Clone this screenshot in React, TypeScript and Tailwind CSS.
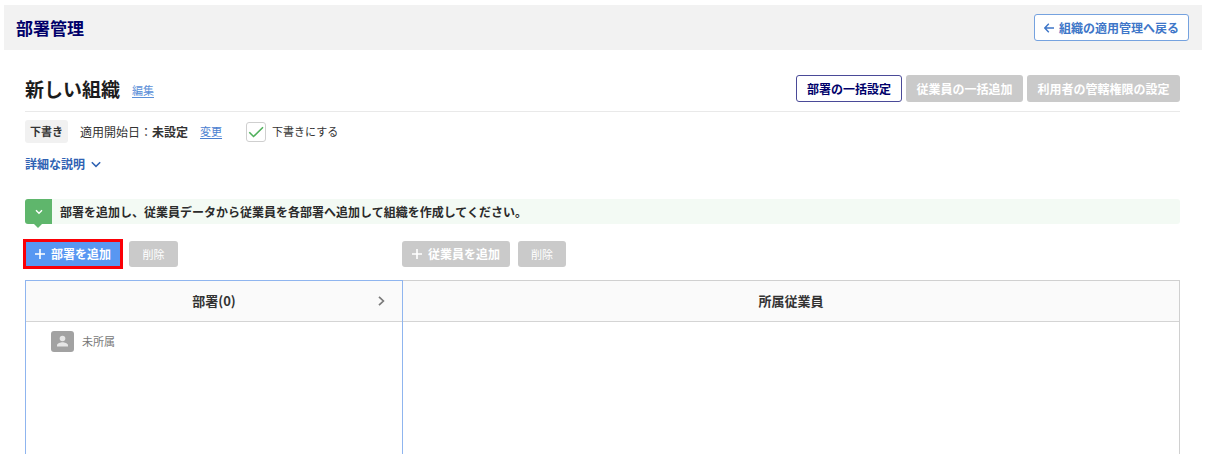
import React from "react";

type ToolButtonProps = {
  children: React.ReactNode;
  className?: string;
  disabled?: boolean;
};

function SolidButton({ children, className = "", disabled }: ToolButtonProps) {
  return (
    <button
      type="button"
      disabled={disabled}
      className={`flex items-center justify-center whitespace-nowrap text-white ${
        disabled ? "rounded-[3px] bg-[#cacaca]" : "bg-[#5897f2]"
      } ${className}`}
    >
      {children}
    </button>
  );
}

function PlusIcon() {
  return (
    <svg width="10" height="10" viewBox="0 0 10 10" fill="none" stroke="currentColor" strokeWidth="1.6" aria-hidden="true">
      <path d="M5 0v10M0 5h10" />
    </svg>
  );
}

function PageHeader() {
  return (
    <header className="mr-[5px] ml-1 flex h-[45px] items-center justify-between bg-[#f2f2f2] pr-[13px] pl-3">
      <h1 className="text-[17px] leading-6 font-bold text-[#00006a]">部署管理</h1>
      <a
        href="#organizations"
        className="flex h-[27px] items-center gap-[5px] whitespace-nowrap rounded-[3px] border border-[#75a2df] bg-white px-[9px] text-xs font-bold text-[#3e76c8]"
      >
        <svg width="10" height="10" viewBox="0 0 10 10" fill="none" stroke="currentColor" strokeWidth="1.4" aria-hidden="true">
          <path d="M10 5H0.8M4.8 0.8L0.8 5l4 4.2" />
        </svg>
        組織の適用管理へ戻る
      </a>
    </header>
  );
}

function OrganizationTitle() {
  return (
    <div className="flex items-center justify-between border-b border-[#e9e9e9] pb-[9px]">
      <div className="flex items-center gap-3">
        <h2 className="text-[19px] leading-[27px] font-bold text-[#1c1c1c]">新しい組織</h2>
        <a href="#edit" className="pt-1 text-[11px] text-[#5b8fd8] underline underline-offset-2">
          編集
        </a>
      </div>
      <div className="flex gap-1">
        <button
          type="button"
          className="flex h-[27px] w-[106px] items-center justify-center whitespace-nowrap rounded-[3px] border border-[#4a4a98] bg-white text-xs font-bold text-[#00006a]"
        >
          部署の一括設定
        </button>
        <SolidButton disabled className="h-[27px] w-[117px] text-xs font-bold">
          従業員の一括追加
        </SolidButton>
        <SolidButton disabled className="h-[27px] w-[153px] text-xs font-bold">
          利用者の管轄権限の設定
        </SolidButton>
      </div>
    </div>
  );
}

function StatusRow() {
  return (
    <div className="mt-2 flex items-center text-[#333333]">
      <span className="flex h-[23px] w-[43px] items-center justify-center rounded-[3px] bg-[#f1f1f1] text-[11px] font-bold">
        下書き
      </span>
      <p className="ml-3 text-xs">
        適用開始日：<strong className="font-bold">未設定</strong>
      </p>
      <a href="#change" className="ml-3 text-[11px] text-[#4a80d0] underline underline-offset-2">
        変更
      </a>
      <div className="ml-6 flex items-center gap-[6px]">
        <span className="relative flex">
          <input
            id="draft"
            type="checkbox"
            defaultChecked
            className="peer size-5 appearance-none rounded-[3px] border border-[#cfcfcf] bg-white"
          />
          <svg
            className="pointer-events-none absolute inset-0 hidden peer-checked:block"
            width="20"
            height="20"
            viewBox="0 0 20 20"
            fill="none"
            stroke="#50b05c"
            strokeWidth="1.6"
            aria-hidden="true"
          >
            <path d="M3.300 10.300l4.200 4.200L17 5.300" />
          </svg>
        </span>
        <label htmlFor="draft" className="text-[11px]">
          下書きにする
        </label>
      </div>
    </div>
  );
}

function Guide() {
  return (
    <div className="mt-[27px] flex h-[25px] items-center gap-2 rounded-[3px] bg-[#f3faf4]">
      <span className="relative flex h-full w-[27px] items-center justify-center rounded-l-[3px] bg-[#5fb66c] text-white">
        <svg width="8" height="6" viewBox="0 0 8 6" fill="none" stroke="currentColor" strokeWidth="1.4" aria-hidden="true">
          <path d="M1 1.2l3 3 3-3" />
        </svg>
        <svg className="absolute top-full left-[9px]" width="8" height="4" viewBox="0 0 8 4" aria-hidden="true">
          <path d="M0 0h8L4 4z" fill="#5fb66c" />
        </svg>
      </span>
      <p className="text-xs font-bold text-[#2b2b2b]">
        部署を追加し、従業員データから従業員を各部署へ追加して組織を作成してください。
      </p>
    </div>
  );
}

export default function App() {
  return (
    <div className="flex min-h-screen flex-col bg-white pt-[5px] font-['Noto_Sans_CJK_JP',sans-serif]">
      <PageHeader />
      <main className="flex flex-1 flex-col pt-[25px] pr-[27px] pl-[25px]">
        <OrganizationTitle />
        <StatusRow />
        <button type="button" className="mt-[13px] flex items-center gap-[6px] self-start text-xs font-bold text-[#2f62b3]">
          詳細な説明
          <svg width="10" height="7" viewBox="0 0 10 7" fill="none" stroke="currentColor" strokeWidth="1.5" aria-hidden="true">
            <path d="M0.8 1.2L5 5.4l4.2-4.2" />
          </svg>
        </button>
        <Guide />
        <div className="mt-[17px] grid grid-cols-[377px_1fr]">
          <div className="flex gap-2">
            <SolidButton className="h-[26px] w-24 gap-[6px] text-xs font-bold outline-3 -outline-offset-1 outline-[#fb0007]">
              <PlusIcon />
              部署を追加
            </SolidButton>
            <SolidButton disabled className="h-[26px] w-[49px] text-[11px]">
              削除
            </SolidButton>
          </div>
          <div className="flex gap-2">
            <SolidButton disabled className="h-[26px] w-[108px] gap-[6px] text-xs font-bold">
              <PlusIcon />
              従業員を追加
            </SolidButton>
            <SolidButton disabled className="h-[26px] w-12 text-[11px]">
              削除
            </SolidButton>
          </div>
        </div>
        <div className="mt-[13px] grid flex-1 grid-cols-[378px_1fr] text-[#333333]">
          <section className="border-x border-t border-[#8fb5ef]">
            <div className="relative flex h-[41px] items-center justify-center border-b border-[#d4d4d4] bg-[#fafafa]">
              <h3 className="text-[13px] font-bold">部署(0)</h3>
              <button type="button" aria-label="部署を展開" className="absolute right-[17px]">
                <svg width="7" height="10" viewBox="0 0 7 10" fill="none" stroke="#7a7a7a" strokeWidth="1.7" aria-hidden="true">
                  <path d="M1 0.8L5.4 5 1 9.2" />
                </svg>
              </button>
            </div>
            <ul>
              <li className="flex items-center gap-2 pt-[9px] pl-[25px] text-[11px] text-[#777777]">
                <svg width="23" height="21" viewBox="0 0 23 21" aria-hidden="true">
                  <rect width="23" height="21" rx="3" fill="#a2a2a2" />
                  <circle cx="11.5" cy="7.5" r="2.8" fill="#e6e6e6" />
                  <path d="M6 15.5v-1.2c0-2 3.6-3 5.500-3s5.500 1 5.500 3v1.200z" fill="#e6e6e6" />
                </svg>
                未所属
              </li>
            </ul>
          </section>
          <section className="border-t border-r border-[#d0d0d0]">
            <div className="flex h-[41px] items-center justify-center border-b border-[#d4d4d4] bg-[#fafafa]">
              <h3 className="text-[13px] font-bold">所属従業員</h3>
            </div>
          </section>
        </div>
      </main>
    </div>
  );
}
